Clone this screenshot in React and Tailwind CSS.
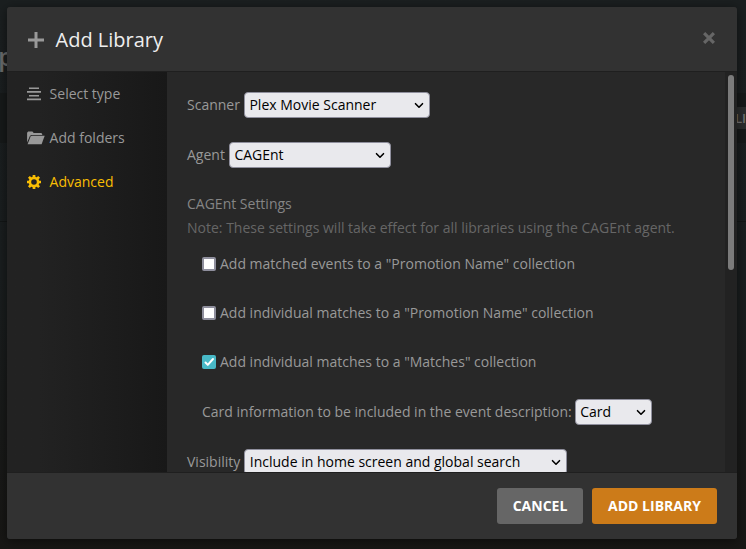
import React from "react";

function SelectBox({ value, className }) {
  return (
    <div className={`flex h-[26px] shrink-0 items-center justify-between rounded-[4px] border border-[#8f8f9d] bg-[#e9e9ed] pr-[4px] pl-[4.5px] text-black ${className}`}>
      <span>{value}</span>
      <svg width="12" height="8" viewBox="0 0 12 8" fill="none" stroke="#000" strokeWidth="1.6" strokeLinecap="round" strokeLinejoin="round">
        <path d="M2.5 2.7L6 6.2l3.5-3.5" />
      </svg>
    </div>
  );
}

function SelectRow({ label, value, className = "", boxClass }) {
  return (
    <div className={`flex h-[26px] shrink-0 items-center ${className}`}>
      <span className="shrink-0">{label}</span>
      <SelectBox value={value} className={boxClass} />
    </div>
  );
}

function CheckRow({ label, checked }) {
  return (
    <div className="mb-[25px] ml-[15px] flex h-6 shrink-0 items-center">
      {checked ? (
        <span className="mr-1 flex size-[14px] items-center justify-center rounded-[2px] bg-[#48b9c7]">
          <svg width="14" height="14" viewBox="0 0 14 14" fill="none" stroke="#fff" strokeWidth="2" strokeLinecap="round" strokeLinejoin="round">
            <path d="M3.5 7.5l2.3 2.4L11 4" />
          </svg>
        </span>
      ) : (
        <span className="mr-1 size-[14px] rounded-[2px] border-2 border-[#8f8f9d] bg-white" />
      )}
      <span>{label}</span>
    </div>
  );
}

function ListIcon() {
  return (
    <svg width="14" height="14" viewBox="0 0 14 14" fill="currentColor">
      <path d="M2 0.4h10v1.6H2zM0 4.1h14v1.6H0zM2 7.9h10v1.6H2zM0 11.6h14v1.6H0z" />
    </svg>
  );
}

function FolderIcon() {
  return (
    <svg width="18" height="14" viewBox="0 0 18 14" fill="currentColor">
      <path d="M0.1 11.5V1.8L1.1 0.5H5.4l1.3 1.6h7.6l0.9 1V4H4.2L2.9 5z" />
      <path d="M4.6 4.7H17.7L14.6 13.2H0.6L3.6 5.6z" />
    </svg>
  );
}

function GearIcon() {
  return (
    <svg width="14" height="14" viewBox="0 0 14 14" fill="none" stroke="currentColor">
      <circle cx="7" cy="7" r="4.1" strokeWidth="2.6" />
      <path d="M7 0v2.5M7 11.5V14M0 7h2.5M11.5 7H14M1.9 1.9l1.9 1.9M10.2 10.2l1.9 1.9M1.9 12.1l1.9-1.9M10.2 3.8l1.9-1.9" strokeWidth="2.7" />
    </svg>
  );
}

function NavItem({ icon, label, active }) {
  return (
    <div className={`flex h-11 items-center pl-5 ${active ? "text-[#f9be03]" : "text-[#999]"}`}>
      <span className="w-[22.6px] shrink-0">{icon}</span>
      <span className="whitespace-nowrap">{label}</span>
    </div>
  );
}

function Backdrop() {
  return (
    <div className="absolute inset-0 flex flex-col overflow-hidden bg-linear-to-b from-[#1b1f20] via-[#1a1e1f] to-[#181715]">
      <div className="flex h-[93px] items-end pb-[17px]">
        <span className="-ml-[2px] text-[26px] leading-[40px] font-semibold text-[#6b6c6c]">p</span>
      </div>
      <div className="flex h-[50px] items-center justify-end bg-[#171a1a]">
        <span className="flex h-[22px] w-[12px] items-center rounded-l bg-[#2c2e2e] pl-[1px] text-[13px] font-semibold text-[#777]">LI</span>
      </div>
      <div className="h-[79px] border-b border-[#131616]" />
    </div>
  );
}

export default function App() {
  return (
    <div className="relative h-[549px] w-[746px] overflow-hidden p-[7px] pr-[9px] pb-[10px] font-['Open_Sans',sans-serif] text-[14px] leading-6 text-[#999]">
      <Backdrop />
      <div className="relative flex h-[532px] w-[730px] flex-col overflow-hidden rounded-[3px] bg-[#282828] shadow-[0_2px_12px_rgba(0,0,0,0.5)]">
        <header className="flex h-[65px] shrink-0 items-center border-b border-[#1f1f1f] bg-[#323232] pt-[2px] pr-[22px] pl-[21px]">
          <svg width="16" height="16" viewBox="0 0 16 16" className="text-[#999]" fill="currentColor">
            <path d="M6.5 0h3v6.5H16v3H9.5V16h-3V9.5H0v-3h6.5z" />
          </svg>
          <h1 className="ml-[11.5px] flex-1 text-[20px] text-[#eee]">Add Library</h1>
          <svg width="12" height="12" viewBox="0 0 12 12" className="mb-[5px]" fill="none" stroke="#666" strokeWidth="3.2">
            <path d="M1.1 1.1l9.8 9.8M10.9 1.1l-9.8 9.8" />
          </svg>
        </header>
        <div className="flex h-[400px] shrink-0">
          <nav className="w-40 shrink-0 bg-linear-to-r from-[#222] from-20% to-[#181818]">
            <NavItem icon={<ListIcon />} label="Select type" />
            <NavItem icon={<FolderIcon />} label="Add folders" />
            <NavItem icon={<GearIcon />} label="Advanced" active />
          </nav>
          <main className="flex flex-1 flex-col overflow-hidden pt-5 pl-5 whitespace-nowrap">
            <SelectRow label="Scanner" value="Plex Movie Scanner" className="mb-6" boxClass="ml-1 w-[186px]" />
            <SelectRow label="Agent" value="CAGEnt" className="mb-6" boxClass="ml-1 w-[162px]" />
            <h2 className="h-6 shrink-0 text-[#858585]">CAGEnt Settings</h2>
            <p className="mb-3 h-6 shrink-0 text-[#666]">Note: These settings will take effect for all libraries using the CAGEnt agent.</p>
            <CheckRow label={'Add matched events to a "Promotion Name" collection'} />
            <CheckRow label={'Add individual matches to a "Promotion Name" collection'} />
            <CheckRow label={'Add individual matches to a "Matches" collection'} checked />
            <SelectRow label="Card information to be included in the event description:" value="Card" className="mb-6 ml-[15px]" boxClass="ml-[3px] w-[77px]" />
            <SelectRow label="Visibility" value="Include in home screen and global search" boxClass="ml-1 w-[323px]" />
          </main>
          <div className="w-3 shrink-0 bg-[#222] pt-[3px] pl-[3px]">
            <div className="h-[195px] w-[6px] rounded-full bg-[#7b7b7b]" />
          </div>
        </div>
        <footer className="flex flex-1 items-start justify-end gap-[9px] border-t border-[#1f1f1f] bg-[#323232] pt-[15px] pr-5 font-bold text-white">
          <button className="h-9 w-[86px] rounded-[3px] bg-[#666]">CANCEL</button>
          <button className="h-9 w-[125px] rounded-[3px] bg-[#cc7b19]">ADD LIBRARY</button>
        </footer>
      </div>
    </div>
  );
}
